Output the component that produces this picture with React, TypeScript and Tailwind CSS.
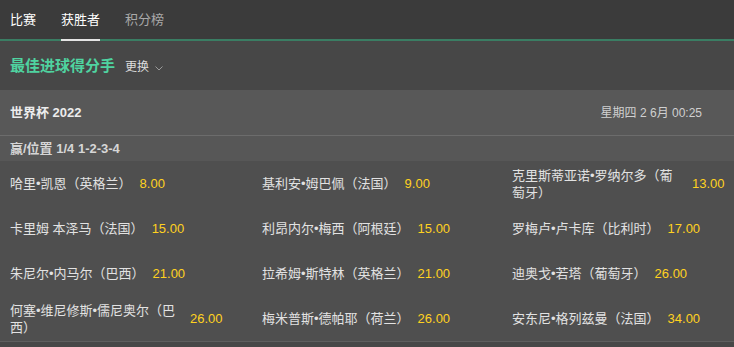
import React from 'react';

type Runner = { name: string; odds: string };

const rows: Runner[][] = [
  [
    { name: '哈里•凯恩（英格兰）', odds: '8.00' },
    { name: '基利安•姆巴佩（法国）', odds: '9.00' },
    { name: '克里斯蒂亚诺•罗纳尔多（葡萄牙）', odds: '13.00' },
  ],
  [
    { name: '卡里姆 本泽马（法国）', odds: '15.00' },
    { name: '利昂内尔•梅西（阿根廷）', odds: '15.00' },
    { name: '罗梅卢•卢卡库（比利时）', odds: '17.00' },
  ],
  [
    { name: '朱尼尔•内马尔（巴西）', odds: '21.00' },
    { name: '拉希姆•斯特林（英格兰）', odds: '21.00' },
    { name: '迪奥戈•若塔（葡萄牙）', odds: '26.00' },
  ],
  [
    { name: '何塞•维尼修斯•儒尼奥尔（巴西）', odds: '26.00' },
    { name: '梅米普斯•德帕耶（荷兰）', odds: '26.00' },
    { name: '安东尼•格列兹曼（法国）', odds: '34.00' },
  ],
];

const tabs = ['比赛', '获胜者', '积分榜'];

const App: React.FC = () => {
  return (
    <div
      className="w-[734px] h-[347px] overflow-hidden bg-[#474747] text-[#e2e2e2]"
      style={{ fontFamily: '"Liberation Sans", "Noto Sans CJK SC", sans-serif' }}
    >
      {/* tabs */}
      <nav className="flex h-[41px] items-stretch gap-[25px] bg-[#3b3b3b] pl-[10px] border-b-2 border-[#3a7d63]">
        {tabs.map((t, i) => (
          <div
            key={t}
            className={`flex items-center text-[13px] -mb-[2px] border-b-2 ${
              i === 1 ? 'border-[#e4e4e4] text-white' : 'border-transparent'
            } ${i === 2 ? 'text-[#a9a9a9]' : ''} ${i === 0 ? 'text-white' : ''}`}
          >
            {t}
          </div>
        ))}
      </nav>

      {/* title */}
      <div className="flex h-[49px] items-center pl-[10px] pt-[2px]">
        <span className="text-[15px] font-bold text-[#4fd3a0]">最佳进球得分手</span>
        <span className="ml-[10px] text-[12px] text-[#dcdcdc]">更换</span>
        <svg width="10" height="10" viewBox="0 0 10 10" className="ml-[5px] mt-[2px]">
          <path d="M1.5 3.5 L5 7 L8.5 3.5" fill="none" stroke="#9a9a9a" strokeWidth="1" />
        </svg>
      </div>

      {/* panel */}
      <div className="bg-[#4f4f4f] border-b border-[#5e5e5e]">
        <div className="flex h-[46px] items-center justify-between bg-[#585858] px-[10px] border-b border-[#6c6c6c]">
          <span className="text-[13px] font-bold text-[#ececec]">世界杯 2022</span>
          <span className="pr-[22px] text-[12px] text-[#d0d0d0]">星期四 2 6月 00:25</span>
        </div>
        <div className="flex h-[25px] items-center bg-[#575757] px-[10px] text-[13px] font-bold text-[#d6d6d6]">
          赢/位置 1/4 1-2-3-4
        </div>

        {rows.map((row, ri) => (
          <div key={ri} className="grid h-[45px] grid-cols-[252px_250px_1fr] items-center">
            {row.map((r) => (
              <div key={r.name} className="flex items-center pl-[10px]">
                <span className="max-w-[172px] text-[13px] leading-[17px] text-[#e2e2e2]">{r.name}</span>
                <span className="ml-[8px] text-[13px] text-[#ffd21f]">{r.odds}</span>
              </div>
            ))}
          </div>
        ))}
      </div>
    </div>
  );
};

export default App;
